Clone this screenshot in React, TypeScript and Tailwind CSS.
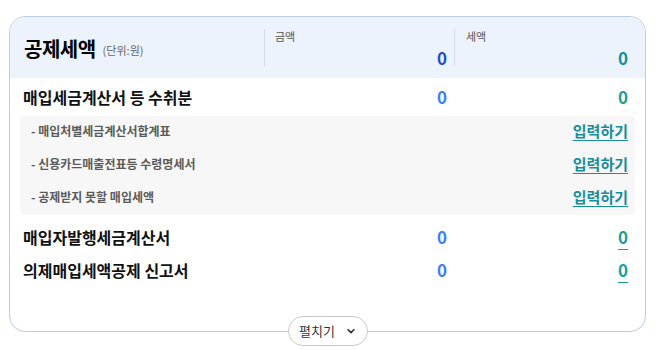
const font = { fontFamily: '"Noto Sans CJK KR", "Noto Sans", sans-serif' };

function SubRow({ label }: { label: string }) {
  return (
    <div className="flex items-center justify-between h-[33px] pl-[11px] pr-[7px] pb-[3px]">
      <span className="text-[12px] font-semibold text-[#5a5a5a]">- {label}</span>
      <a href="#" className="text-[15px] font-bold text-[#178e9c] underline underline-offset-[3px]">
        입력하기
      </a>
    </div>
  );
}

function Row({ label, link }: { label: string; link?: boolean }) {
  return (
    <div className="flex items-center h-[33px]">
      <span className="flex-1 pl-[3px] text-[16px] font-bold text-[#111]">{label}</span>
      <span className="w-[190px] pr-[7px] text-right text-[17px] font-bold text-[#3d7ff5]">0</span>
      <span className="w-[181px] pr-[7px] text-right text-[17px] font-bold text-[#17a097]">
        {link ? <a href="#" className="underline underline-offset-[5px]">0</a> : "0"}
      </span>
    </div>
  );
}

export default function App() {
  return (
    <div className="w-[657px] h-[350px] bg-white pt-[16px] pl-[9px]" style={font}>
      <div className="relative w-[637px] h-[316px] border border-[#bccbe6] rounded-[16px]">
        <div className="flex h-[61px] bg-[#edf3fd] rounded-t-[15px]">
          <div className="w-[254px] flex items-center pl-[14px] pt-[2px]">
            <span className="text-[20px] font-bold text-black tracking-[-0.5px]">공제세액</span>
            <span className="ml-[7px] mt-[3px] text-[11px] text-[#666]">(단위:원)</span>
          </div>
          <div className="w-[190px] my-[12px] border-l border-[#d5dbe6] flex flex-col justify-between pl-[10px] pr-[7px]">
            <span className="text-[11px] text-[#555] leading-none mt-[2px]">금액</span>
            <span className="text-right text-[17px] font-bold text-[#1c4fcf] leading-none">0</span>
          </div>
          <div className="flex-1 my-[12px] border-l border-[#d5dbe6] flex flex-col justify-between pl-[11px] pr-[17px]">
            <span className="text-[11px] text-[#555] leading-none mt-[2px]">세액</span>
            <span className="text-right text-[17px] font-bold text-[#11919a] leading-none">0</span>
          </div>
        </div>
        <div className="px-[10px] pt-[2px]">
          <Row label="매입세금계산서 등 수취분" />
          <div className="mt-[3px] bg-[#f7f7f7] rounded-[4px]">
            <SubRow label="매입처별세금계산서합계표" />
            <SubRow label="신용카드매출전표등 수령명세서" />
            <SubRow label="공제받지 못할 매입세액" />
          </div>
          <div className="mt-[5px]">
            <Row label="매입자발행세금계산서" link />
            <Row label="의제매입세액공제 신고서" link />
          </div>
        </div>
        <button className="absolute left-1/2 -translate-x-1/2 bottom-[-15px] h-[30px] w-[80px] flex items-center justify-center gap-[11px] bg-white border border-[#c9c9c9] rounded-full text-[13px] text-[#333]">
          펼치기
          <svg width="10" height="10" viewBox="0 0 24 24" fill="none" stroke="#333" strokeWidth="4" strokeLinecap="round" strokeLinejoin="round">
            <path d="M5 9l7 7 7-7" />
          </svg>
        </button>
      </div>
    </div>
  );
}
